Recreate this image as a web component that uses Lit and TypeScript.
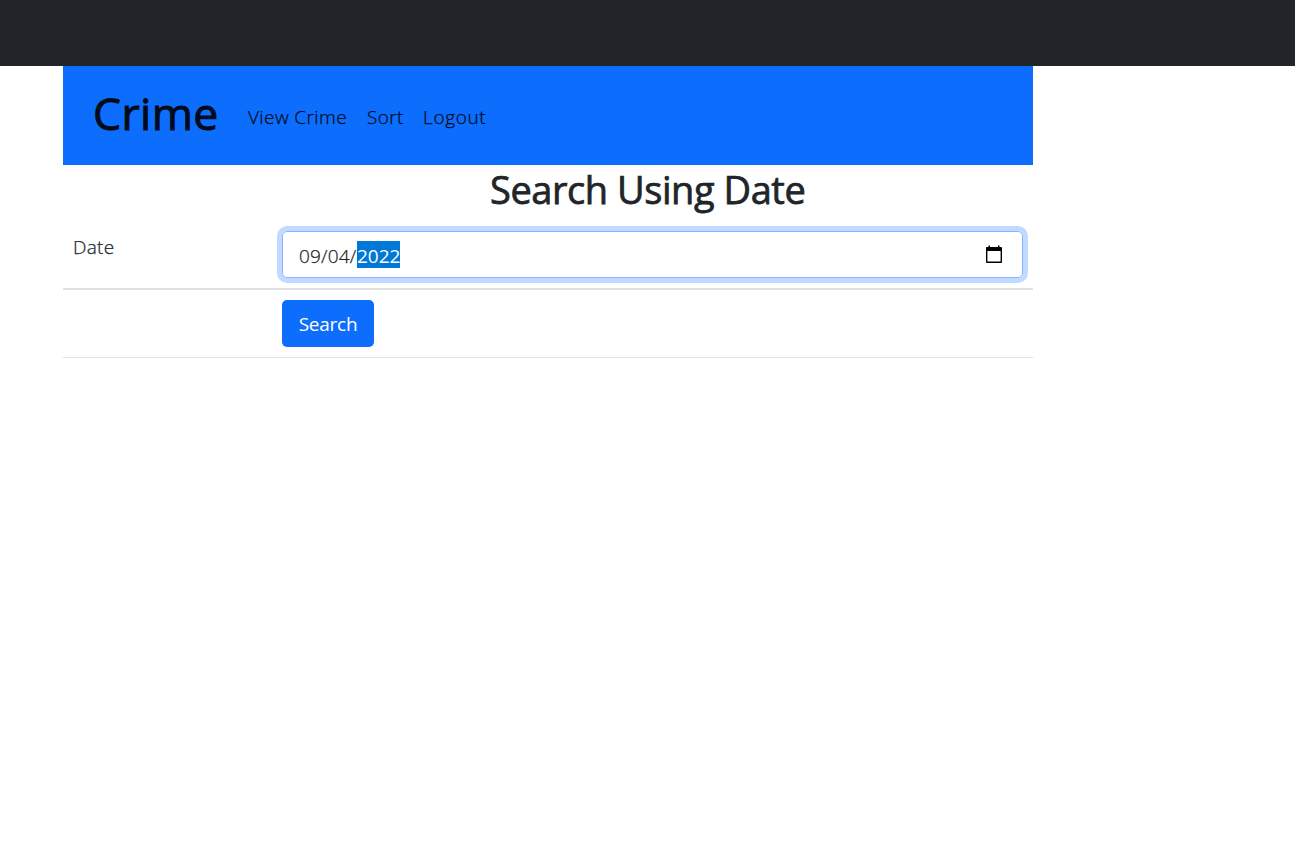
import { LitElement, html, css } from "lit";
import { customElement } from "lit/decorators.js";

@customElement("app-root")
export class AppRoot extends LitElement {
  static styles = css`
    :host {
      display: block;
      min-height: 100vh;
      background: #fff;
      color: #212529;
      font-family: "Segoe UI", "Open Sans", "Noto Sans", sans-serif;
      font-size: 19px;
      line-height: 30px;
    }
    * { box-sizing: border-box; }
    .topbar { height: 66px; background: #212529; }
    .page { width: 970px; margin-left: 63px; }
    .nav {
      height: 99px;
      background: #0d6efd;
      display: flex;
      align-items: center;
      padding: 0 0 0 30px;
      color: rgba(0, 0, 0, 0.9);
    }
    .brand { font-size: 44.5px; color: #010b19; -webkit-text-stroke: 1px; line-height: 54px; width: 125px; white-space: nowrap; margin: 0 30px 6px 0; letter-spacing: 0.4px; }
    .links { display: flex; gap: 20px; padding-top: 3px; font-weight: 300; -webkit-text-stroke: 0.25px; }
    .link { white-space: nowrap; color: #010b19; text-decoration: none; }
    .view { width: 99px; letter-spacing: 0.4px; }
    .sort { width: 36px; letter-spacing: 0.35px; }
    .logout { width: 63px; letter-spacing: 0.65px; }
    h1 {
      margin: 0;
      height: 56px;
      padding: 0 0 0 427px;
      font-size: 38px;
      font-weight: 400;
      -webkit-text-stroke: 0.75px;
      letter-spacing: -0.45px;
      line-height: 48px;
      white-space: nowrap;
    }
    .row { display: grid; grid-template-columns: 209px 1fr; border-bottom: 1px solid #dee2e6; }
    .row.date { border-bottom-width: 2px; }
    .cell { padding: 10px; }
    .label { padding-top: 11px; font-weight: 300; letter-spacing: 0.3px; -webkit-text-stroke: 0.25px; }
    .field {
      height: 47px;
      border: 1px solid #86b7fe;
      border-radius: 5px;
      box-shadow: 0 0 0 5px #c2daff;
      padding: 1px 20px 0 16px;
      display: flex;
      align-items: center;
      justify-content: space-between;
    }
    .value { display: flex; height: 27px; margin-top: -1px; line-height: 30px; }
    .plain { width: 58px; font-weight: 300; letter-spacing: 0.2px; -webkit-text-stroke: 0.25px; }
    .selected { width: 43px; height: 27px; background: #0078d7; color: #fff; }
    .icon { display: block; width: 16px; height: 18px; margin-top: -2px; }
    .button {
      display: block;
      width: 92px;
      height: 47px;
      padding: 0;
      border: 0;
      border-radius: 5px;
      background: #0d6efd;
      color: #fff;
      font: inherit;
      letter-spacing: -0.25px;
    }
  `;

  render() {
    return html`
      <header class="topbar"></header>
      <main class="page">
        <nav class="nav">
          <div class="brand"><span>Crime</span></div>
          <div class="links">
            <a class="link view">View Crime</a>
            <a class="link sort">Sort</a>
            <a class="link logout">Logout</a>
          </div>
        </nav>
        <h1>Search Using Date</h1>
        <div class="row date">
          <div class="cell label">Date</div>
          <div class="cell">
            <div class="field">
              <div class="value"><span class="plain">09/04/</span><span class="selected">2022</span></div>
              <svg class="icon" viewBox="0 0 16 18">
                <path fill="#000" fill-rule="evenodd" d="M2.500 .5H4V2h8V.5h1.500V2H15a1 1 0 0 1 1 1V17a1 1 0 0 1-1 1H1a1 1 0 0 1-1-1V3a1 1 0 0 1 1-1h1.500ZM1.400 6v10.600h13.200V6Z" />
              </svg>
            </div>
          </div>
        </div>
        <div class="row">
          <div class="cell"></div>
          <div class="cell"><button class="button">Search</button></div>
        </div>
      </main>
    `;
  }
}
